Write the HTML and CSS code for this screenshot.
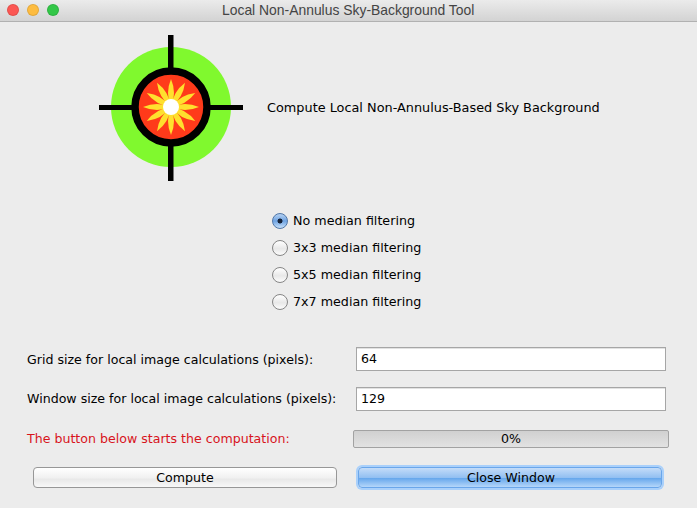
FILE: index.html
```html
<!DOCTYPE html>
<html lang="en">
<head>
    <meta charset="UTF-8">
    <title>Local Non-Annulus Sky-Background Tool</title>
    <link rel="stylesheet" href="styles.css">
</head>
<body>
    <div class="titlebar">
        <div class="lights">
            <span class="light red"></span>
            <span class="light yellow"></span>
            <span class="light green"></span>
        </div>
        <div class="title">Local Non-Annulus Sky-Background Tool</div>
    </div>

    <div class="header">
        <svg class="logo" width="146" height="146" viewBox="0 0 146 146">
            <circle cx="73" cy="72" r="60" fill="#80f92e"/>
            <rect x="70" y="0" width="5.5" height="146" fill="#000"/>
            <rect x="1" y="70" width="144" height="5" fill="#000"/>
            <circle cx="73" cy="72" r="36" fill="#ff3a1a" stroke="#000" stroke-width="7.5"/>
            <g fill="#ffe02e">
                <path d="M73 44 Q79 58 73 72 Q67 58 73 44Z"/>
                <path transform="rotate(30 73 72)" d="M73 44 Q79 58 73 72 Q67 58 73 44Z"/>
                <path transform="rotate(60 73 72)" d="M73 44 Q79 58 73 72 Q67 58 73 44Z"/>
                <path transform="rotate(90 73 72)" d="M73 44 Q79 58 73 72 Q67 58 73 44Z"/>
                <path transform="rotate(120 73 72)" d="M73 44 Q79 58 73 72 Q67 58 73 44Z"/>
                <path transform="rotate(150 73 72)" d="M73 44 Q79 58 73 72 Q67 58 73 44Z"/>
                <path transform="rotate(180 73 72)" d="M73 44 Q79 58 73 72 Q67 58 73 44Z"/>
                <path transform="rotate(210 73 72)" d="M73 44 Q79 58 73 72 Q67 58 73 44Z"/>
                <path transform="rotate(240 73 72)" d="M73 44 Q79 58 73 72 Q67 58 73 44Z"/>
                <path transform="rotate(270 73 72)" d="M73 44 Q79 58 73 72 Q67 58 73 44Z"/>
                <path transform="rotate(300 73 72)" d="M73 44 Q79 58 73 72 Q67 58 73 44Z"/>
                <path transform="rotate(330 73 72)" d="M73 44 Q79 58 73 72 Q67 58 73 44Z"/>
            </g>
            <circle cx="73" cy="72" r="8" fill="#fff"/>
        </svg>
        <div class="heading">Compute Local Non-Annulus-Based Sky Background</div>
    </div>

    <div class="radios">
        <div class="radio-row"><span class="radio checked"></span>No median filtering</div>
        <div class="radio-row"><span class="radio"></span>3x3 median filtering</div>
        <div class="radio-row"><span class="radio"></span>5x5 median filtering</div>
        <div class="radio-row"><span class="radio"></span>7x7 median filtering</div>
    </div>

    <div class="field-row first">
        <label>Grid size for local image calculations (pixels):</label>
        <div class="text-box">64</div>
    </div>
    <div class="field-row second">
        <label>Window size for local image calculations (pixels):</label>
        <div class="text-box">129</div>
    </div>

    <div class="status-row">
        <div class="status-text">The button below starts the computation:</div>
        <div class="progress">0%</div>
    </div>

    <div class="buttons">
        <div class="btn">Compute</div>
        <div class="btn primary">Close Window</div>
    </div>
</body>
</html>
```

FILE: styles.css
```css
body {
    margin: 0;
    width: 697px;
    height: 508px;
    overflow: hidden;
    background-color: #ececec;
    color: #000;
    font-family: "DejaVu Sans", sans-serif;
    font-size: 12.6px;
}
.titlebar {
    display: flex;
    align-items: center;
    height: 20px;
    padding: 0 0 1px 7px;
    background: linear-gradient(#ebebeb, #d3d3d3);
    border-bottom: 1px solid #b1b1b1;
}
.lights {
    display: flex;
    gap: 8px;
}
.light {
    box-sizing: border-box;
    width: 12px;
    height: 12px;
    border-radius: 50%;
    border: 1px solid rgba(0, 0, 0, 0.1);
}
.light.red { background: #fc5753; }
.light.yellow { background: #fdbc40; }
.light.green { background: #33c748; }
.title {
    margin-left: 163px;
    font-family: "Liberation Sans", sans-serif;
    font-size: 13.9px;
    color: #444;
}
.header {
    display: flex;
    align-items: center;
    gap: 23px;
    padding: 13px 0 0 98px;
}
.logo {
    display: block;
}
.heading {
    font-size: 12.85px;
    padding-bottom: 2px;
}
.radios {
    margin: 26px 0 0 272px;
}
.radio-row {
    display: flex;
    align-items: center;
    gap: 5px;
    height: 27px;
    font-size: 12.7px;
}
.radio {
    box-sizing: border-box;
    width: 16px;
    height: 16px;
    border-radius: 50%;
    border: 1px solid #858585;
    background: linear-gradient(#fff, #e8e8e8 55%, #fcfcfc);
}
.radio.checked {
    border-color: #4f76a8;
    background: radial-gradient(circle, #15233a 0 2.2px, transparent 2.8px), linear-gradient(#b7d2f2, #6ea3e2 50%, #c6e0fa);
}
.field-row {
    display: flex;
    align-items: center;
    padding-left: 27px;
}
.field-row.first {
    margin-top: 32px;
}
.field-row.second {
    margin-top: 16px;
}
.field-row label {
    width: 329px;
}
.field-row.second label {
    padding-bottom: 2px;
}
.text-box {
    box-sizing: border-box;
    width: 310px;
    height: 24px;
    line-height: 22px;
    padding-left: 4px;
    background: #fff;
    border: 1px solid #a6a6a6;
    box-shadow: inset 0 1px 0 #e2e2e2;
}
.status-row {
    display: flex;
    align-items: center;
    margin-top: 19px;
    padding-left: 27px;
}
.status-text {
    width: 326px;
    padding-bottom: 2px;
    color: #d8141c;
}
.progress {
    box-sizing: border-box;
    width: 316px;
    height: 18px;
    line-height: 16px;
    text-align: center;
    border: 1px solid #a2a2a2;
    border-radius: 2px;
    background: linear-gradient(#d0d0d0, #e2e2e2);
}
.buttons {
    display: flex;
    align-items: center;
    gap: 22px;
    margin-top: 19px;
    padding-left: 33px;
}
.btn {
    box-sizing: border-box;
    width: 304px;
    height: 21px;
    line-height: 20px;
    text-align: center;
    border: 1px solid #979797;
    border-radius: 4px;
    background: linear-gradient(#fff, #f1f1f1 50%, #e9e9e9 60%, #f8f8f8);
}
.btn.primary {
    width: 304px;
    margin-left: -1px;
    padding-left: 2px;
    border-color: #6aa6ea;
    background: linear-gradient(#c4dcf8, #93c0f2 50%, #68a8ec 55%, #b4d6fa);
    box-shadow: 0 0 0 2px #a9d0fb;
}
```
